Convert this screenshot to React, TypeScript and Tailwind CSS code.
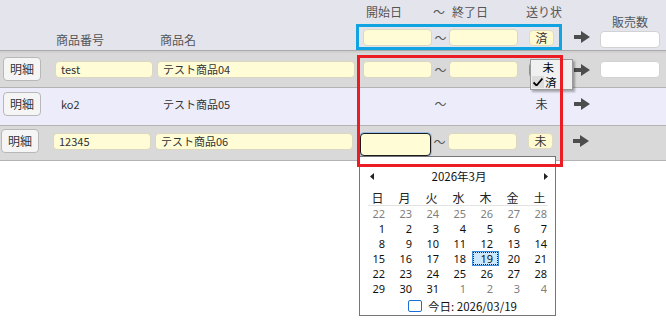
import React from "react";

function Arrow() {
  return (
    <svg width="16" height="12" viewBox="0 0 16 12" className="block shrink-0">
      <path d="M0 4H7V0L16 6L7 12V8H0Z" fill="#4d4d4d" />
    </svg>
  );
}

function DetailBtn() {
  return (
    <div className="w-[38px] h-[24px] shrink-0 rounded-[4px] border border-[#b8b8b8] bg-[#f5f5f5] flex items-center justify-center text-[12px] text-[#333] leading-none">
      明細
    </div>
  );
}

const yinput =
  "h-[17px] shrink-0 rounded-[4px] border border-[#dad7c2] bg-[#fffcd6] flex items-center pl-[5px] text-[11px] text-[#333] leading-none whitespace-nowrap";

const prev = [22, 23, 24, 25, 26, 27, 28];

function Calendar() {
  const cells: { d: number; other: boolean }[] = [];
  prev.forEach((d) => cells.push({ d, other: true }));
  for (let i = 1; i <= 31; i++) cells.push({ d: i, other: false });
  [1, 2, 3, 4].forEach((d) => cells.push({ d, other: true }));
  const days = ["日", "月", "火", "水", "木", "金", "土"];
  return (
    <div className="absolute left-[359px] top-[156px] w-[197px] h-[160px] border border-[#767676] bg-white font-['Noto_Sans','Noto_Sans_CJK_JP',sans-serif] text-[#111]">
      <div className="mt-[11px] h-[16px] flex items-center justify-between pl-[10px] pr-[7px] text-[12px] leading-[16px]">
        <svg width="4" height="7" viewBox="0 0 4 7" className="block">
          <path d="M4 0V7L0 3.5Z" fill="#222" />
        </svg>
        <span className="font-['Noto_Sans_CJK_JP',sans-serif] text-[11.5px] leading-[16px]">2026年3月</span>
        <svg width="4" height="7" viewBox="0 0 4 7" className="block">
          <path d="M0 0V7L4 3.5Z" fill="#222" />
        </svg>
      </div>
      <div className="mt-[6px] ml-[4px] w-[189px] grid grid-cols-7 h-[15px] text-[12px] leading-[15px] font-['Noto_Sans_CJK_JP',sans-serif] text-[#222]">
        {days.map((d) => (
          <div key={d} className="h-[15px] flex items-center justify-center">
            {d}
          </div>
        ))}
      </div>
      <div className="ml-[8px] w-[180px] h-px bg-[#e3e3e3]" />
      <div className="ml-[4px] w-[189px] grid grid-cols-7 text-[11px] leading-[14px]">
        {cells.map((c, i) => {
          const sel = !c.other && c.d === 19;
          return (
            <div
              key={i}
              className={
                sel
                  ? "relative h-[15px] flex items-center justify-end pr-[6px] bg-[#cce8ff] border border-[#3d8ee0]"
                  : c.other
                  ? "h-[15px] flex items-center justify-end pr-[6px] text-[#808080]"
                  : "h-[15px] flex items-center justify-end pr-[6px] text-[#111]"
              }
            >
              {sel && <div className="absolute inset-0 border border-dotted border-[#222]" />}
              <span className={sel ? "relative -mr-px" : ""}>{c.d}</span>
            </div>
          );
        })}
      </div>
      <div className="mt-[2px] h-[16px] flex items-center justify-center pl-[10px] text-[12px] leading-[16px]">
        <div className="w-[14px] h-[12px] rounded-[2px] border border-[#1a6fd0]" />
        <span className="ml-[6px] font-['Noto_Sans_CJK_JP',sans-serif] text-[11.5px] leading-[16px]">今日: 2026/03/19</span>
      </div>
    </div>
  );
}

export default function App() {
  return (
    <div className="relative w-[666px] h-[326px] bg-white overflow-hidden font-['Noto_Sans_CJK_JP',sans-serif]">
      {/* header */}
      <div className="flex h-[50px] bg-[#e4e4ed]">
        <div className="w-[55px] shrink-0" />
        <div className="w-[102px] shrink-0 flex items-end pb-[4px] pl-[1px] text-[12px] text-[#555] leading-none">
          商品番号
        </div>
        <div className="w-[206px] shrink-0 flex items-end pb-[4px] pl-[3px] text-[12px] text-[#555] leading-none">
          商品名
        </div>
        <div className="w-[191px] shrink-0 flex flex-col">
          <div className="h-[24px] flex items-center text-[12px] text-[#555] leading-none whitespace-nowrap">
            <span className="ml-[3px] w-[67px] shrink-0">開始日</span>
            <span className="w-[19px] shrink-0">～</span>
            <span className="w-[74px] shrink-0">終了日</span>
            <span className="shrink-0">送り状</span>
          </div>
          <div className="mt-[5px] flex items-center">
            <div className={`${yinput} w-[69px]`} />
            <div className="w-[17px] text-center text-[12px] text-[#555] leading-none">～</div>
            <div className={`${yinput} w-[69px]`} />
            <div className="ml-[11px] w-[25px] h-[16px] rounded-[4px] border border-[#e0dcc0] bg-[#fffad0] flex items-center justify-center text-[12px] text-[#333] leading-none">
              済
            </div>
          </div>
        </div>
        <div className="ml-[20px] w-[16px] pt-[31px]">
          <Arrow />
        </div>
        <div className="ml-[10px] w-[60px] flex flex-col">
          <div className="mt-[15px] h-[14px] flex items-center justify-center text-[12px] text-[#555] leading-none whitespace-nowrap">
            販売数
          </div>
          <div className="mt-[2px] h-[17px] rounded-[4px] border border-[#d2d2d2] bg-white" />
        </div>
      </div>
      <div className="h-px bg-[#a9a9a9]" />
      <div className="h-[2px] bg-[#d0d0d0]" />

      {/* row 1 */}
      <div className="h-[35px] bg-[#d9d9d9] border-b border-[#b3b3b3] flex items-start pt-[4px] pl-[3px]">
        <DetailBtn />
        <div className={`${yinput} ml-[14px] mt-[4px] w-[98px]`}>test</div>
        <div className={`${yinput} ml-[4px] mt-[4px] w-[198px]`}>テスト商品04</div>
        <div className="mt-[4px] flex items-center">
          <div className={`${yinput} ml-[8px] w-[69px]`} />
          <div className="w-[17px] text-center text-[12px] text-[#555] leading-none">～</div>
          <div className={`${yinput} w-[69px]`} />
          <div className="ml-[11px] w-[25px] h-[16px] rounded-[4px] border border-[#5b9be0] bg-[#fffad0]" />
          <div className="ml-[20px]">
            <Arrow />
          </div>
          <div className="ml-[10px] w-[60px] h-[17px] rounded-[4px] border border-[#d2d2d2] bg-white" />
        </div>
      </div>

      {/* row 2 */}
      <div className="h-[38px] bg-[#ececfa] border-b border-[#b3b3b3] flex items-start pt-[4px] pl-[3px]">
        <DetailBtn />
        <div className="ml-[14px] w-[98px] h-[24px] flex items-center pl-[6px] text-[11px] text-[#333] leading-none">
          ko2
        </div>
        <div className="ml-[4px] w-[198px] h-[24px] flex items-center pl-[6px] text-[11px] text-[#333] leading-none">
          テスト商品05
        </div>
        <div className="h-[24px] flex items-center">
          <div className="ml-[8px] w-[69px]" />
          <div className="w-[17px] text-center text-[12px] text-[#555] leading-none">～</div>
          <div className="w-[69px]" />
          <div className="ml-[11px] w-[25px] text-center text-[12px] text-[#333] leading-none">未</div>
          <div className="ml-[20px]">
            <Arrow />
          </div>
        </div>
      </div>

      {/* row 3 */}
      <div className="h-[35px] bg-[#d9d9d9] border-b border-[#b3b3b3] flex items-start pt-[3px] pl-[1px]">
        <DetailBtn />
        <div className={`${yinput} ml-[14px] mt-[4px] w-[98px]`}>12345</div>
        <div className={`${yinput} ml-[4px] mt-[4px] w-[198px]`}>テスト商品06</div>
        <div className="mt-[4px] flex items-start">
          <div className="ml-[7px] w-[71px] h-[23px] shrink-0 rounded-[4px] border border-[#1c1c1c] bg-[#fffcd6] shadow-[0_0_0_1px_#9bbbe8]" />
          <div className="w-[17px] h-[17px] flex items-center justify-center text-[12px] text-[#555] leading-none">～</div>
          <div className={`${yinput} w-[69px]`} />
          <div className="ml-[11px] w-[25px] h-[16px] rounded-[4px] border border-[#e0dcc0] bg-[#fffad0] flex items-center justify-center text-[12px] text-[#333] leading-none">
            未
          </div>
          <div className="ml-[20px] mt-[2px]">
            <Arrow />
          </div>
        </div>
      </div>

      <Calendar />

      {/* dropdown menu */}
      <div className="absolute left-[530px] top-[59px] w-[43px] h-[31px] border border-[#9a9a9a] bg-[#f0f0f0] shadow-[2px_2px_2px_rgba(0,0,0,0.3)] text-[11.5px] text-black leading-[15px]">
        <div className="h-[15px] flex items-center justify-end pr-[18px]">未</div>
        <div className="h-[14px] flex items-center">
          <div className="ml-[1px] w-[12px] h-[12px] bg-[#dcdcdc] flex items-center justify-center">
            <svg width="10" height="8" viewBox="0 0 10 8" className="block">
              <path d="M0.5 4.5L3.5 7.5L9.5 0.5" stroke="#000" strokeWidth="1.8" fill="none" />
            </svg>
          </div>
          <span className="ml-[1px]">済</span>
        </div>
      </div>

      {/* annotation boxes */}
      <div className="absolute left-[356px] top-[24px] w-[206px] h-[26px] border-[3px] border-[#11a4e0]" />
      <div className="absolute left-[357px] top-[55px] w-[206px] h-[112px] border-[3px] border-[#ec1c24]" />
    </div>
  );
}
